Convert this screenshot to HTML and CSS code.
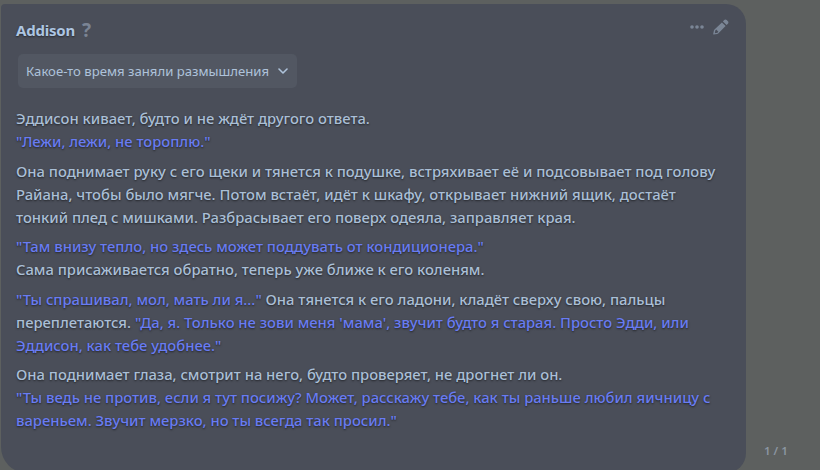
FILE: index.html
```html
<!DOCTYPE html>
<html lang="en">
<head>
  <meta charset="UTF-8">
  <title>Addison</title>
  <link rel="stylesheet" href="styles.css">
</head>
<body>
  <div class="chat">
    <div class="message">
      <div class="message-head">
        <div class="name-row">
          <span class="name">Addison</span>
          <span class="help">?</span>
        </div>
        <div class="actions">
          <svg class="icon-dots" width="14" height="4" viewBox="0 0 14 4"><circle cx="2" cy="2" r="1.8"/><circle cx="7" cy="2" r="1.8"/><circle cx="12" cy="2" r="1.8"/></svg>
          <svg class="icon-pencil" width="16" height="16" viewBox="0 0 16 16"><path d="M11.2 1.1c.7-.7 1.8-.7 2.5 0l1.2 1.2c.7.7.7 1.8 0 2.5l-1.3 1.3-3.7-3.7zM8.9 3.4l3.7 3.7-7.4 7.4c-.3.3-.7.5-1.1.6L.6 15.4c-.3 0-.5-.2-.4-.5l.7-3.4c.1-.4.3-.8.6-1.1zM3.2 10.6l-.9.9-.5 2.7 2.7-.5.9-.9z" fill-rule="evenodd"/></svg>
        </div>
      </div>

      <div class="thinking">
        <span>Какое-то время заняли размышления</span>
        <svg width="10" height="6" viewBox="0 0 10 6"><path d="M1 1l4 4 4-4" fill="none" stroke="currentColor" stroke-width="1.6" stroke-linecap="round" stroke-linejoin="round"/></svg>
      </div>

      <div class="message-body">
        <p>Эддисон кивает, будто и не ждёт другого ответа.<br><q>"Лежи, лежи, не тороплю."</q></p>
        <p>Она поднимает руку с его щеки и тянется к подушке, встряхивает её и подсовывает под голову<br>Райана, чтобы было мягче. Потом встаёт, идёт к шкафу, открывает нижний ящик, достаёт<br>тонкий плед с мишками. Разбрасывает его поверх одеяла, заправляет края.</p>
        <p><q>"Там внизу тепло, но здесь может поддувать от кондиционера."</q><br>Сама присаживается обратно, теперь уже ближе к его коленям.</p>
        <p><q>"Ты спрашивал, мол, мать ли я..."</q> Она тянется к его ладони, кладёт сверху свою, пальцы<br>переплетаются. <q>"Да, я. Только не зови меня 'мама', звучит будто я старая. Просто Эдди, или<br>Эддисон, как тебе удобнее."</q></p>
        <p>Она поднимает глаза, смотрит на него, будто проверяет, не дрогнет ли он.<br><q>"Ты ведь не против, если я тут посижу? Может, расскажу тебе, как ты раньше любил яичницу с<br>вареньем. Звучит мерзко, но ты всегда так просил."</q></p>
      </div>
    </div>
    <div class="counter">1 / 1</div>
  </div>
</body>
</html>
```

FILE: styles.css
```css
* {
  box-sizing: border-box;
}

html, body {
  height: 100%;
}

body {
  margin: 0;
  overflow: hidden;
  background-color: #5d605f;
  font-family: "Noto Sans", sans-serif;
  color: #aabfd6;
}

.chat {
  display: flex;
  height: 100%;
  padding: 4px 0 0 1px;
}

.message {
  flex: none;
  width: 745px;
  height: 469px;
  padding: 16px 15px 0;
  background-color: #4a4e59;
  border-radius: 4px 20px 20px 26px;
}

.message-head {
  display: flex;
  justify-content: space-between;
  align-items: flex-start;
  height: 20px;
}

.name-row {
  display: flex;
  align-items: center;
  gap: 7px;
}

.name {
  font-size: 15px;
  font-weight: 700;
  letter-spacing: -0.2px;
  line-height: 20px;
  color: #aec6e2;
  text-shadow: 0 1px 2px rgba(0, 0, 0, 0.5);
}

.help {
  font-size: 19px;
  font-weight: 700;
  line-height: 20px;
  color: #7b8494;
}

.actions {
  display: flex;
  align-items: center;
  gap: 9px;
  padding-right: 2px;
  margin-top: -1px;
}

.icon-dots, .icon-pencil {
  fill: #7b8696;
}

.thinking {
  display: inline-flex;
  align-items: center;
  gap: 9px;
  height: 34px;
  margin: 14px 0 0 2px;
  padding: 0 9px 0 8px;
  background-color: #525762;
  border-radius: 5px;
  font-size: 13.15px;
  color: #aec2da;
}

.message-body {
  margin-top: 19px;
  font-size: 14.78px;
  line-height: 23px;
  font-weight: 500;
  text-shadow: 0 1px 2px rgba(0, 0, 0, 0.55);
}

.message-body p {
  margin: 0 0 6.5px;
}

.message-body q {
  quotes: none;
  color: #697cf2;
}

.counter {
  flex: 1;
  align-self: flex-end;
  padding: 0 0 12px 18px;
  font-size: 11.5px;
  font-weight: 600;
  color: #8b95a1;
}
```
